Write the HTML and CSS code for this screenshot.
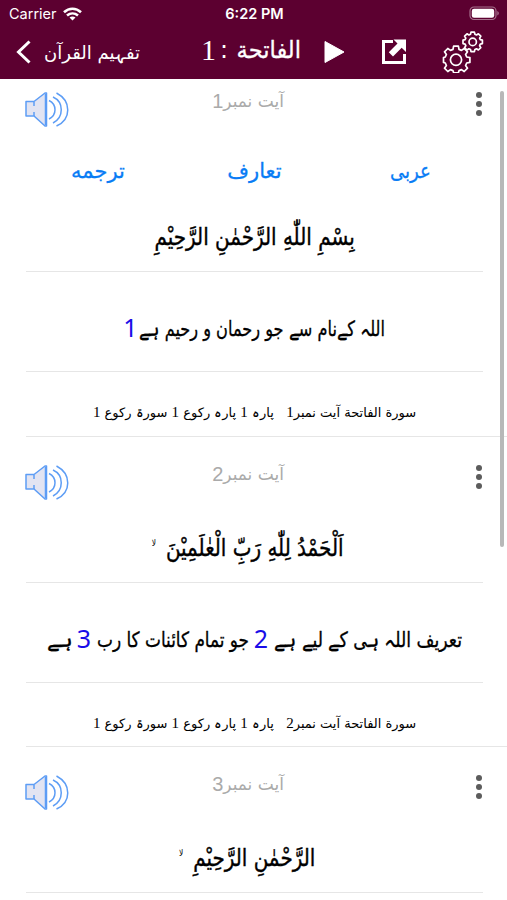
FILE: index.html
```
<!DOCTYPE html>
<html lang="ur">
<head>
  <meta charset="UTF-8" />
  <meta name="viewport" content="width=device-width, initial-scale=1.0"/>
  <title>تفہیم القرآن</title>
  <link rel="stylesheet" href="styles.css">
</head>
<body>
  <svg class="defs" width="0" height="0">
    <symbol id="speaker" viewBox="0 0 44 36">
      <path d="M1 9.500h8L20 1h1.500v33H20L9 24H1z" fill="#e2e4f2" stroke="#5d9df5" stroke-width="1.500" stroke-linejoin="round"/>
      <path d="M9 10v4M9 20v4M20.500 2v31" fill="none" stroke="#5d9df5" stroke-width="1.500"/>
      <path d="M24 8.500c8 4 8 14.500 0 18.500M28 5c11 5 11 20.500 0 26M31.500 1c15 8 15 26 0 33" fill="none" stroke="#5d9df5" stroke-width="1.500"/>
    </symbol>
  </svg>

  <header class="header">
    <div class="status">
      <span class="carrier">Carrier
        <svg width="19" height="14" viewBox="0 0 19 14" fill="none" stroke="#fff" stroke-width="2.600">
          <path d="M1 5.200c5-4.600 12-4.600 17 0M4 8.600c3.300-2.900 7.700-2.900 11 0"/>
          <path d="M9.500 13.500L6.500 10.600c1.800-1.500 4.200-1.500 6 0z" fill="#fff" stroke="none"/>
        </svg>
      </span>
      <span class="clock">6:22 PM</span>
      <svg class="battery" width="31" height="15" viewBox="0 0 31 15">
        <rect x="1" y="1" width="26" height="12.500" rx="4" fill="none" stroke="#a5708c" stroke-width="1.200"/>
        <rect x="2.800" y="2.800" width="22.400" height="9" rx="2.200" fill="#fff"/>
        <path d="M28.300 5v4.500c2-.8 2-3.700 0-4.500z" fill="#a5708c"/>
      </svg>
    </div>
    <nav class="nav">
      <svg class="back" width="16" height="24" viewBox="0 0 16 24"><path d="M13.500 1.500L2.500 12l11 10.500" fill="none" stroke="#fff" stroke-width="3"/></svg>
      <span class="app-name" dir="rtl">تفہیم القرآن</span>
      <h1 class="surah" dir="rtl"><span class="surah-name">الفاتحة</span><span>:</span><span class="surah-no">1</span></h1>
      <svg class="play" width="21" height="24" viewBox="0 0 21 24"><path d="M1 1.500L20 12 1 22.500z" fill="#fff" stroke="#fff" stroke-linejoin="round"/></svg>
      <svg class="share" width="26" height="26" viewBox="0 0 26 26">
        <path d="M12 2.500H2.500v21h21v-8.500" fill="none" stroke="#fff" stroke-width="3"/>
        <path d="M12.500 .500H25v12.500l-4.300-4.200-8.700 8.600-4.200-4.200 8.700-8.600z" fill="#fff"/>
      </svg>
      <svg class="gears" width="42" height="42" viewBox="0 0 42 42" fill="none" stroke="#fff" stroke-width="1.700" stroke-linejoin="round">
        <path d="M11.600 15.200h4.800l.6 3.200 2.500 1 2.700-1.900 3.300 3.300-1.900 2.700 1.100 2.500 3.200.6v4.800l-3.200.6-1.100 2.500 1.900 2.700-3.300 3.300-2.700-1.900-2.500 1-.6 2.200h-4.800l-.6-2.200-2.500-1-2.700 1.900-3.300-3.300 1.900-2.700-1.100-2.500-1.800-.6v-4.800l1.800-.6 1.100-2.500-1.900-2.700 3.300-3.300 2.700 1.900 2.500-1z"/>
        <circle cx="14" cy="28.800" r="5.600"/>
        <path d="M29 1.200h3.400l.5 2.100 1.600.7 1.900-1.200 2.400 2.400-1.200 1.900.7 1.600 2.100.5v3.400l-2.100.5-.7 1.600 1.200 1.900-2.400 2.400-1.900-1.200-1.600.7-.5 2.100H29l-.5-2.100-1.600-.7-1.900 1.200-2.400-2.400 1.200-1.900-.7-1.600-2.100-.5V9.200l2.100-.5.7-1.600-1.200-1.900L25 2.800 26.900 4l1.600-.7z"/>
        <circle cx="30.700" cy="10.900" r="3.700"/>
      </svg>
    </nav>
  </header>

  <main class="list">
    <section class="ayah first">
      <div class="ayah-head">
        <svg class="speaker" width="44" height="36"><use href="#speaker"/></svg>
        <span class="number" dir="rtl">آیت نمبر<b>1</b></span>
        <span class="more"><i></i><i></i><i></i></span>
      </div>
      <div class="tabs">
        <a>ترجمه</a>
        <a>تعارف</a>
        <a>عربی</a>
      </div>
      <p class="arabic" dir="rtl"><span>بِسْمِ اللّٰهِ الرَّحْمٰنِ الرَّحِيْمِ</span></p>
      <p class="urdu" dir="rtl"><svg width="246" height="50"><text x="246" y="32" textLength="246" lengthAdjust="spacingAndGlyphs">اللہ کےنام سے جو رحمان و رحیم ہے</text></svg><em>1</em></p>
      <p class="meta" dir="rtl"><span>سورة الفاتحة آیت نمبر<b>1</b> &nbsp; پارہ <b>1</b> پارہ رکوع <b>1</b> سورۃ رکوع <b>1</b></span></p>
    </section>

    <section class="ayah">
      <div class="ayah-head">
        <svg class="speaker" width="44" height="36"><use href="#speaker"/></svg>
        <span class="number" dir="rtl">آیت نمبر<b>2</b></span>
        <span class="more"><i></i><i></i><i></i></span>
      </div>
      <p class="arabic waqf" dir="rtl"><span>اَلْحَمْدُ لِلّٰهِ رَبِّ الْعٰلَمِيْنَ<small>لا</small></span></p>
      <p class="urdu" dir="rtl"><svg width="188" height="50"><text x="188" y="32" textLength="188" lengthAdjust="spacingAndGlyphs">تعریف اللہ ہی کے لیے ہے</text></svg><em>2</em><svg width="152" height="50"><text x="152" y="32" textLength="152" lengthAdjust="spacingAndGlyphs">جو تمام کائنات کا رب</text></svg><em>3</em><svg width="25" height="50"><text x="25" y="32" textLength="25" lengthAdjust="spacingAndGlyphs">ہے</text></svg></p>
      <p class="meta" dir="rtl"><span>سورة الفاتحة آیت نمبر<b>2</b> &nbsp; پارہ <b>1</b> پارہ رکوع <b>1</b> سورۃ رکوع <b>1</b></span></p>
    </section>

    <section class="ayah">
      <div class="ayah-head">
        <svg class="speaker" width="44" height="36"><use href="#speaker"/></svg>
        <span class="number" dir="rtl">آیت نمبر<b>3</b></span>
        <span class="more"><i></i><i></i><i></i></span>
      </div>
      <p class="arabic waqf" dir="rtl"><span>الرَّحْمٰنِ الرَّحِيْمِ<small>لا</small></span></p>
    </section>
    <div class="scrollbar"></div>
  </main>
</body>
</html>
```

FILE: styles.css
```
* {
  box-sizing: border-box;
}
body {
  margin: 0;
  height: 900px;
  overflow: hidden;
  background: #fff;
  color: #000;
  font-family: "DejaVu Sans", sans-serif;
}
.defs {
  display: block;
}
.header {
  height: 79px;
  background: #5c0030;
  color: #fff;
}
.status {
  display: grid;
  grid-template-columns: 1fr auto 1fr;
  align-items: center;
  height: 27px;
  padding: 0 7px 0 9px;
  font: 14.5px Inter, sans-serif;
}
.carrier {
  display: flex;
  align-items: center;
  gap: 6px;
}
.clock {
  font-weight: 600;
}
.battery {
  justify-self: end;
}
.nav {
  display: flex;
  align-items: center;
  height: 50px;
  padding-left: 16px;
}
.nav span {
  white-space: nowrap;
}
.nav svg {
  flex: none;
}
.app-name {
  display: flex;
  justify-content: center;
  width: 98px;
  margin-left: 11px;
  font-size: 18px;
}
.surah {
  display: flex;
  align-items: center;
  width: 100px;
  height: 40px;
  margin: -4px 0 0 60px;
  font-size: 24px;
  font-weight: normal;
}
.surah-name {
  flex: none;
  width: 73px;
  transform: scaleX(0.94);
  transform-origin: right;
  -webkit-text-stroke: 0.3px #fff;
}
.surah-no {
  margin-right: 4px;
  font: 30px "Liberation Serif", serif;
}
.play {
  margin-left: 23px;
}
.share {
  margin-left: 36px;
}
.gears {
  margin-left: 35px;
}
.list {
  position: relative;
  height: 821px;
  overflow: hidden;
}
.ayah {
  height: 310.4px;
  padding-top: 28px;
  margin-left: 26px;
  border-bottom: 1px solid #e6e6e6;
}
.ayah.first {
  height: 358px;
  padding-top: 13px;
}
.ayah-head {
  display: grid;
  grid-template-columns: 44px 1fr 6px;
  height: 36px;
  margin: 0 25px 0 -1px;
}
.number {
  display: flex;
  justify-content: center;
  align-items: center;
  height: 18px;
  line-height: 18px;
  font-size: 17px;
  color: #aaa;
  padding-right: 49px;
}
.number b {
  font: 20px "Liberation Sans", sans-serif;
}
.more {
  display: flex;
  flex-direction: column;
  gap: 3px;
}
.more i {
  width: 6px;
  height: 6px;
  border-radius: 50%;
  background: #5c5c5c;
}
.tabs {
  display: flex;
  justify-content: space-between;
  height: 63px;
  align-items: center;
  padding: 22px 77px 0 45px;
  font-size: 21px;
  color: #087cf5;
  -webkit-text-stroke: 0.3px #087cf5;
}
.tabs a:nth-child(2) {
  margin-left: -6px;
}
.tabs a:last-child {
  width: 40px;
  transform: scaleX(0.86);
  transform-origin: left;
}
p {
  display: flex;
  align-items: center;
  justify-content: center;
  margin: 0 24px 0 0;
  border-bottom: 1px solid #e6e6e6;
  white-space: nowrap;
}
p > span {
  flex: none;
}
.arabic {
  height: 82px;
  padding-top: 12px;
  font-size: 24px;
}
.first .arabic {
  height: 81px;
}
.arabic span {
  transform: scaleX(0.83);
  -webkit-text-stroke: 0.4px #000;
}
.arabic.waqf {
  padding-right: 14px;
}
.arabic small {
  display: inline-block;
  margin-right: 12px;
  font-size: 9px;
  vertical-align: 10px;
  -webkit-text-stroke: 0;
}
.urdu {
  height: 100px;
  padding-top: 15px;
  gap: 6px;
  font-family: "DejaVu Sans Condensed", "DejaVu Sans", sans-serif;
  font-stretch: condensed;
  font-size: 21px;
}
.urdu svg {
  flex: none;
  overflow: visible;
  stroke: #000;
  stroke-width: 0.3px;
}
.urdu em {
  width: 13px;
  margin-top: -4px;
  font: 25px "Noto Sans", sans-serif;
  color: #1a0de8;
}
.first .urdu {
  gap: 1px;
}
.meta {
  height: 65px;
  padding-top: 15px;
  border: 0;
  font-size: 13px;
}
.meta b {
  font: 15px "Liberation Serif", serif;
}
.scrollbar {
  position: absolute;
  top: 12px;
  right: 3px;
  width: 4px;
  height: 456px;
  border-radius: 2px;
  background: #b8b8b8;
}
```
